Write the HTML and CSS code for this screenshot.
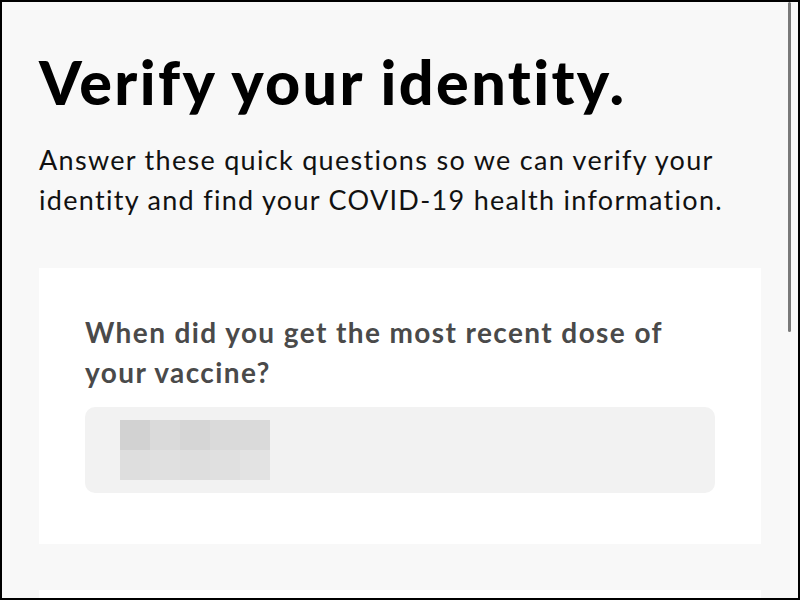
FILE: index.html
```html
<!DOCTYPE html>
<html lang="en">
<head>
    <meta charset="UTF-8">
    <meta name="viewport" content="width=device-width, initial-scale=1.0">
    <title>Verify your identity</title>
    <link rel="stylesheet" href="styles.css">
</head>
<body>
    <div class="screen">
        <div class="page">
            <h1>Verify your identity.</h1>
            <p class="intro">Answer these quick questions so we can verify your identity and find your COVID-19 health information.</p>

            <div class="card">
                <label class="question" for="doseDate">When did you get the most recent dose of your vaccine?</label>
                <div class="field" id="doseDate">
                    <div class="blur">
                        <span class="px px-a"></span><span class="px px-b"></span><span class="px px-c"></span><span class="px px-b"></span><span class="px px-b"></span>
                        <span class="px px-d"></span><span class="px px-e"></span><span class="px px-d"></span><span class="px px-e"></span><span class="px px-f"></span>
                    </div>
                </div>
            </div>

            <div class="card card-next"></div>
        </div>
        <div class="scrollbar"></div>
    </div>
</body>
</html>
```

FILE: styles.css
```css
html, body {
    margin: 0;
    padding: 0;
}
body {
    font-family: 'Lato', 'Noto Sans', sans-serif;
    background-color: #000;
}
.screen {
    position: relative;
    width: 796px;
    height: 596px;
    margin: 2px;
    background-color: #f8f8f8;
    overflow: hidden;
}
.page {
    padding: 44px 37px 0 37px;
}
h1 {
    margin: 0;
    font-size: 61px;
    font-weight: 900;
    line-height: 72px;
    color: #000;
    letter-spacing: 2.4px;
}
.intro {
    margin: 22px 0 0 0;
    font-size: 27px;
    line-height: 40px;
    letter-spacing: 1.3px;
    color: #111;
}
.card {
    margin-top: 48px;
    background-color: #fff;
    padding: 44px 46px 51px 46px;
}
.question {
    display: block;
    font-size: 28px;
    font-weight: 700;
    line-height: 40px;
    letter-spacing: 1.4px;
    color: #4a4a4a;
}
.field {
    margin-top: 15px;
    height: 86px;
    border-radius: 10px;
    background-color: #f2f2f2;
    display: flex;
    align-items: center;
    padding-left: 35px;
}
.blur {
    display: grid;
    grid-template-columns: repeat(5, 30px);
    grid-template-rows: repeat(2, 30px);
}
.px-a { background-color: #d2d2d2; }
.px-b { background-color: #dadada; }
.px-c { background-color: #d6d6d6; }
.px-d { background-color: #dedede; }
.px-e { background-color: #e0e0e0; }
.px-f { background-color: #e3e3e3; }
.card-next {
    margin-top: 46px;
    height: 60px;
    padding: 0;
}
.scrollbar {
    position: absolute;
    top: 0;
    right: 7px;
    width: 3px;
    height: 330px;
    border-radius: 2px;
    background-color: #7a7a7a;
}
```
